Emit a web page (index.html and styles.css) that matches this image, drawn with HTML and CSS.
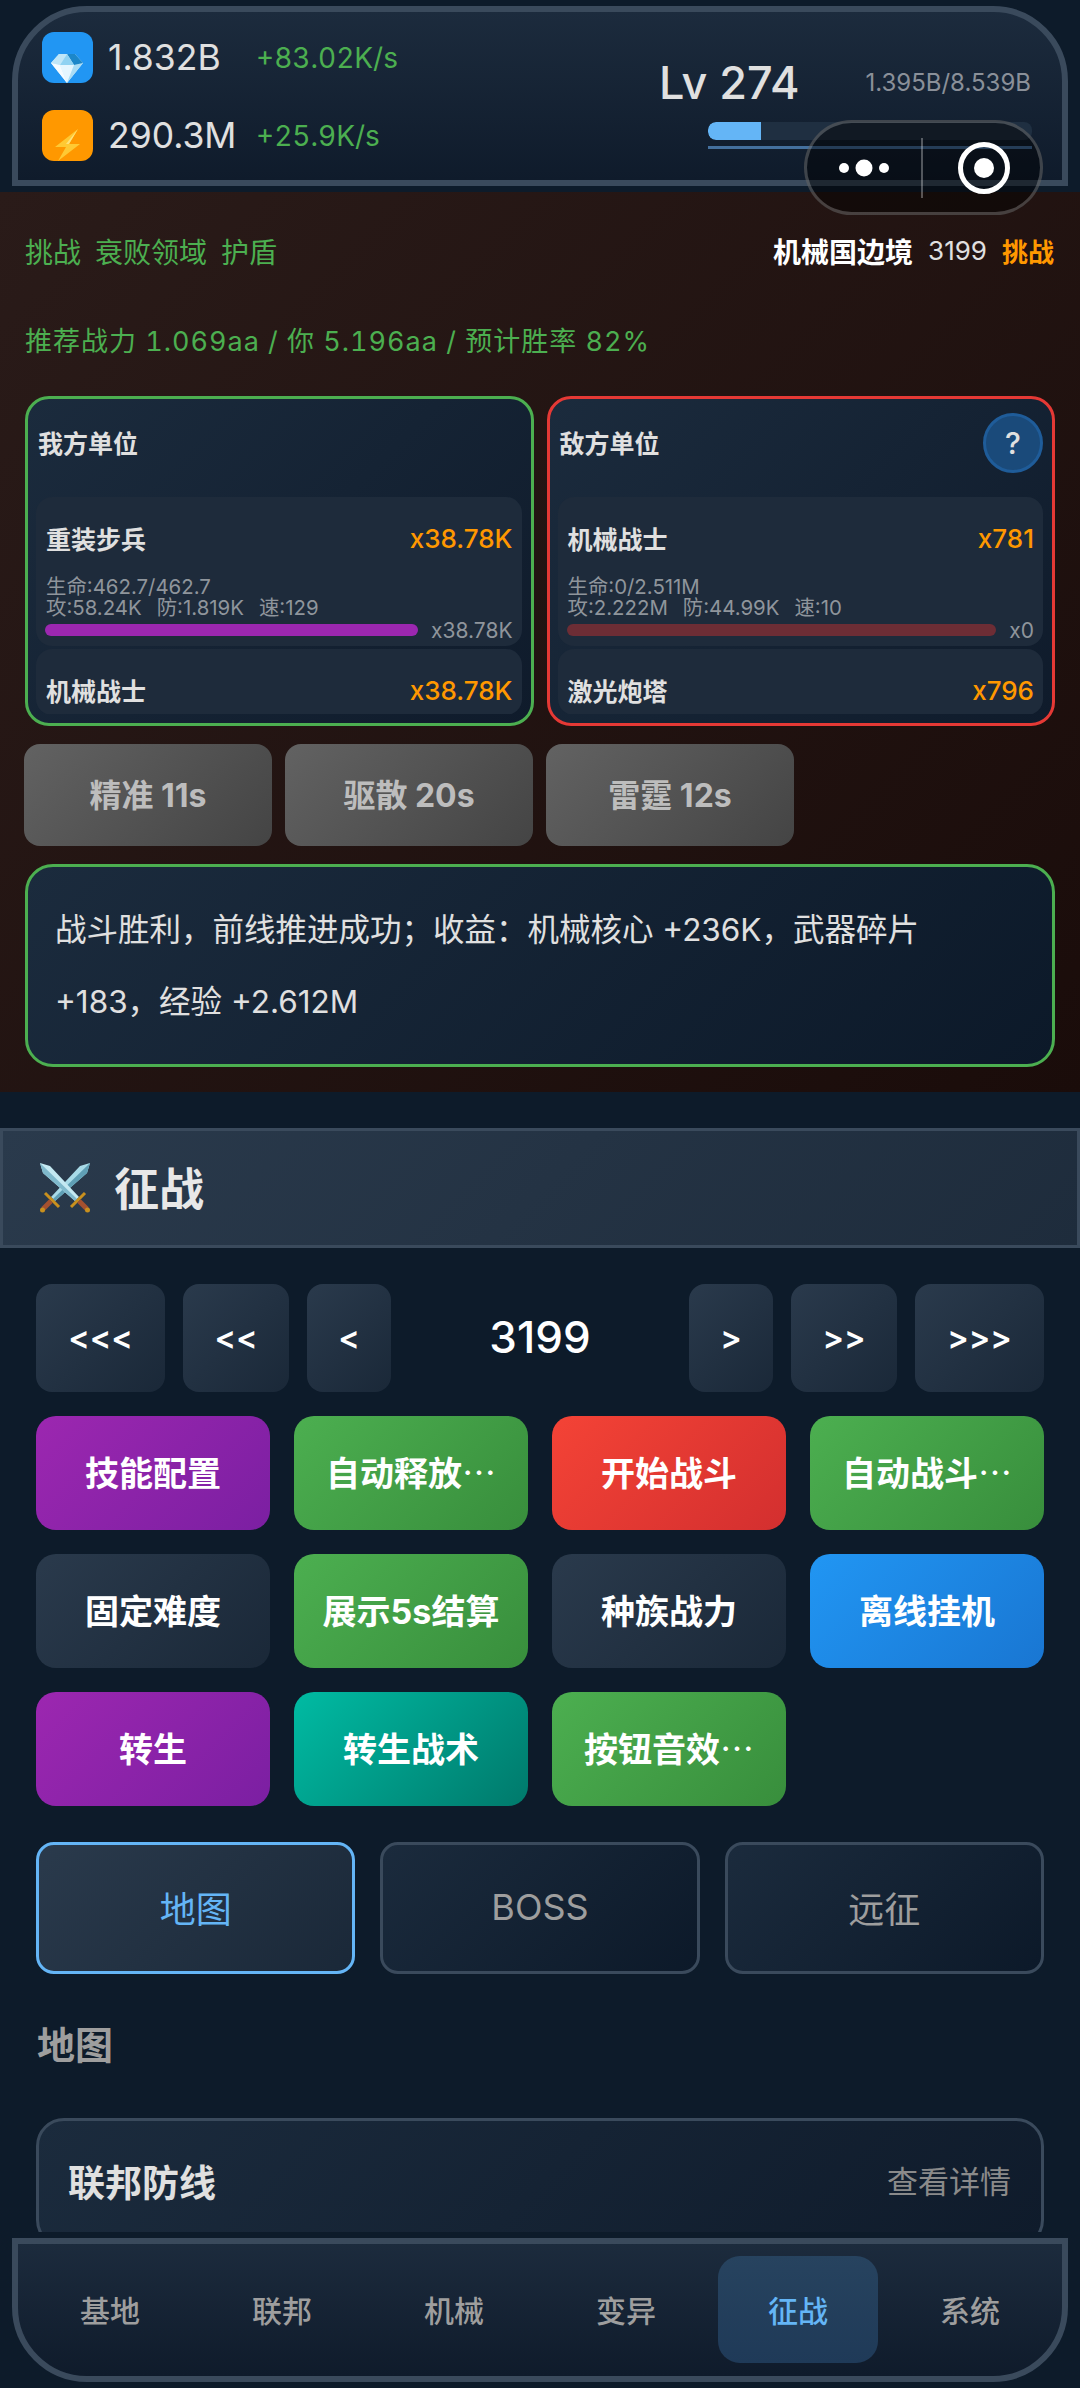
FILE: index.html
```html
<!DOCTYPE html>
<html lang="zh-CN">
<head>
 <meta charset="UTF-8">
 <meta name="viewport" content="width=device-width, initial-scale=1.0">
 <title>征战</title>
 <link rel="stylesheet" href="styles.css">
</head>
<body>

<header class="topBar">
 <div class="resList">
  <div class="resRow">
   <span class="resIcon blue">
    <svg viewBox="0 0 51 51" width="51" height="51">
     <polygon points="9,31 17,22 33,22 41,31 25,51" fill="#d6f0fc"/>
     <polygon points="9,31 18,33 25,51" fill="#f4fbff"/>
     <polygon points="18,33 32,33 25,51" fill="#e4f6ff"/>
     <polygon points="32,33 41,31 25,51" fill="#a9dcf5"/>
     <polygon points="17,22 25,22 18,33 9,31" fill="#bfe6f8"/>
     <polygon points="25,22 33,22 41,31 32,33" fill="#1c87c9"/>
     <polygon points="25,22 32,33 18,33" fill="#8fd2f2"/>
    </svg>
   </span>
   <span class="resValue">1.832B</span>
   <span class="resRate">+83.02K/s</span>
  </div>
  <div class="resRow">
   <span class="resIcon orange">
    <svg viewBox="0 0 51 51" width="51" height="51">
     <polygon points="36,19 13,37 24,37 16,51 38,34 27,34" fill="#ffc933"/>
     <polygon points="36,19 24,34 27,34" fill="#ffe27a"/>
    </svg>
   </span>
   <span class="resValue">290.3M</span>
   <span class="resRate">+25.9K/s</span>
  </div>
 </div>
 <div class="levelBox">
  <div class="levelHead">
   <span class="levelNum">Lv 274</span>
   <span class="levelExp">1.395B/8.539B</span>
  </div>
  <div class="expTrack"><div class="expFill" style="width:16.4%"></div></div>
  <div class="expLine"></div>
 </div>
</header>

<div class="capsule">
 <svg class="capsuleDots" viewBox="0 0 60 20" width="60" height="20">
  <circle cx="10" cy="10" r="5" fill="#fff"/>
  <circle cx="30" cy="10" r="8.5" fill="#fff"/>
  <circle cx="50" cy="10" r="5" fill="#fff"/>
 </svg>
 <span class="capsuleLine"></span>
 <svg class="capsuleRing" viewBox="0 0 54 54" width="54" height="54">
  <circle cx="27" cy="27" r="23.5" fill="none" stroke="#fff" stroke-width="5"/>
  <circle cx="27" cy="27" r="10" fill="#fff"/>
 </svg>
</div>

<section class="battle">
 <div class="battleHead">
  <div class="battleTags"><span>挑战</span><span>衰败领域</span><span>护盾</span></div>
  <div class="battleStage"><b>机械国边境</b><span>3199</span><b class="orangeText">挑战</b></div>
 </div>
 <div class="battleHint">推荐战力 1.069aa / 你 5.196aa / 预计胜率 82%</div>

 <div class="sides">
  <div class="side green">
   <div class="sideHead"><span>我方单位</span></div>
   <div class="unitList">
    <div class="unit">
     <div class="unitHead"><b>重装步兵</b><b class="orangeText">x38.78K</b></div>
     <div class="unitStats">
      <div>生命:462.7/462.7</div>
      <div><span>攻:58.24K</span><span>防:1.819K</span><span>速:129</span></div>
     </div>
     <div class="unitBar">
      <div class="barTrack"><div class="barFill purple"></div></div>
      <span>x38.78K</span>
     </div>
    </div>
    <div class="unit">
     <div class="unitHead"><b>机械战士</b><b class="orangeText">x38.78K</b></div>
    </div>
   </div>
  </div>
  <div class="side red">
   <div class="sideHead"><span>敌方单位</span><span class="helpBtn">?</span></div>
   <div class="unitList">
    <div class="unit">
     <div class="unitHead"><b>机械战士</b><b class="orangeText">x781</b></div>
     <div class="unitStats">
      <div>生命:0/2.511M</div>
      <div><span>攻:2.222M</span><span>防:44.99K</span><span>速:10</span></div>
     </div>
     <div class="unitBar">
      <div class="barTrack"><div class="barFill dead"></div></div>
      <span>x0</span>
     </div>
    </div>
    <div class="unit">
     <div class="unitHead"><b>激光炮塔</b><b class="orangeText">x796</b></div>
    </div>
   </div>
  </div>
 </div>

 <div class="skills">
  <div class="skillBtn">精准 11s</div>
  <div class="skillBtn">驱散 20s</div>
  <div class="skillBtn">雷霆 12s</div>
 </div>

 <div class="result">战斗胜利，前线推进成功；收益：机械核心 +236K，武器碎片 +183，经验 +2.612M</div>
</section>

<div class="pageTitle">
 <svg viewBox="0 0 50 50" width="50" height="50">
  <polygon points="50,0 47,10 15,38 11,34 40,3" fill="#a8dbe8"/>
  <polygon points="50,0 47,10 15,38 13,36" fill="#5f9fb5"/>
  <polygon points="0,0 10,3 39,34 35,38 3,10" fill="#c4e9f2"/>
  <polygon points="0,0 3,10 35,38 37,36" fill="#7fb9cc"/>
  <line x1="5" y1="30" x2="19" y2="44" stroke="#c8901e" stroke-width="3"/>
  <line x1="45" y1="30" x2="31" y2="44" stroke="#c8901e" stroke-width="3"/>
  <line x1="11" y1="38" x2="3" y2="46" stroke="#a5512f" stroke-width="5"/>
  <line x1="39" y1="38" x2="47" y2="46" stroke="#a5512f" stroke-width="5"/>
  <circle cx="2.5" cy="47" r="2.5" fill="#c8901e"/>
  <circle cx="47.5" cy="47" r="2.5" fill="#c8901e"/>
 </svg>
 <span>征战</span>
</div>

<main class="content">
 <div class="stepper">
  <div class="stepBtn wide">&lt;&lt;&lt;</div>
  <div class="stepBtn mid">&lt;&lt;</div>
  <div class="stepBtn small">&lt;</div>
  <div class="stepValue">3199</div>
  <div class="stepBtn small">&gt;</div>
  <div class="stepBtn mid">&gt;&gt;</div>
  <div class="stepBtn wide">&gt;&gt;&gt;</div>
 </div>

 <div class="actions">
  <div class="actBtn bgPurple">技能配置</div>
  <div class="actBtn bgGreen">自动释放<i>…</i></div>
  <div class="actBtn bgRed">开始战斗</div>
  <div class="actBtn bgGreen">自动战斗<i>…</i></div>
  <div class="actBtn bgSlate">固定难度</div>
  <div class="actBtn bgGreen">展示5s结算</div>
  <div class="actBtn bgSlate">种族战力</div>
  <div class="actBtn bgBlue">离线挂机</div>
  <div class="actBtn bgPurple">转生</div>
  <div class="actBtn bgTeal">转生战术</div>
  <div class="actBtn bgGreen">按钮音效<i>…</i></div>
 </div>

 <div class="tabs">
  <div class="tab active">地图</div>
  <div class="tab">BOSS</div>
  <div class="tab">远征</div>
 </div>

 <h2 class="sectionName">地图</h2>

 <div class="mapCard">
  <b>联邦防线</b>
  <span>查看详情</span>
 </div>
</main>

<nav class="bottomNav">
 <div class="navItem">基地</div>
 <div class="navItem">联邦</div>
 <div class="navItem">机械</div>
 <div class="navItem">变异</div>
 <div class="navItem active">征战</div>
 <div class="navItem">系统</div>
</nav>

</body>
</html>
```

FILE: styles.css
```css
*{
 box-sizing: border-box;
}

html, body{
 margin: 0;
 padding: 0;
}

body{
 position: relative;
 width: 1080px;
 height: 2388px;
 overflow: hidden;
 display: flex;
 flex-direction: column;
 background-color: #0d1b2a;
 color: #e0e0e0;
 font-family: Inter, "Noto Sans CJK SC", sans-serif;
}

b{
 font-weight: 700;
}

.orangeText{
 color: #ff9800;
}

/* top bar */
.topBar{
 flex: none;
 display: flex;
 justify-content: space-between;
 height: 180px;
 margin: 6px 12px;
 padding: 20px 30px 0 24px;
 border: 6px solid #3a4a5c;
 border-radius: 75px 75px 0 0;
 background: linear-gradient(180deg, #1c2b3d, #0f1b2b);
}

.resList{
 display: flex;
 flex-direction: column;
 gap: 27px;
}

.resRow{
 display: flex;
 align-items: center;
 height: 51px;
}

.resIcon{
 width: 51px;
 height: 51px;
 border-radius: 12px;
 overflow: hidden;
 display: block;
}

.resIcon svg{
 display: block;
}

.resIcon.blue{
 background-color: #2196f3;
}

.resIcon.orange{
 background-color: #ff9800;
}

.resValue{
 margin-left: 15px;
 font-size: 35.5px;
 width: 148px;
 color: #e0e0e0;
}

.resRate{
 font-size: 28px;
 font-variant-numeric: tabular-nums;
 color: #4caf50;
}

.levelBox{
 width: 373px;
 padding-top: 26px;
}

.levelHead{
 display: flex;
 justify-content: space-between;
 align-items: center;
 height: 48px;
}

.levelNum{
 font-size: 45px;
 font-weight: 500;
}

.levelExp{
 font-size: 24px;
 color: #8a9099;
 padding-right: 1px;
}

.expTrack{
 margin: 16px 0 0 49px;
 height: 18px;
 background-color: #1f2f41;
 border-radius: 8px;
 overflow: hidden;
}

.expFill{
 height: 100%;
 background-color: #64b5f6;
 border-radius: 8px 0 0 8px;
}

.expLine{
 margin: 6px 0 0 49px;
 height: 3px;
 background-color: #44709e;
}

/* wechat capsule */
.capsule{
 position: absolute;
 left: 804px;
 top: 120px;
 width: 239px;
 height: 95px;
 border: 3px solid rgba(255, 255, 255, 0.22);
 border-radius: 48px;
 background-color: rgba(0, 0, 0, 0.45);
}

.capsuleDots{
 position: absolute;
 left: 27px;
 top: 35px;
}

.capsuleLine{
 position: absolute;
 left: 114px;
 top: 15px;
 width: 2px;
 height: 60px;
 background-color: rgba(255, 255, 255, 0.3);
}

.capsuleRing{
 position: absolute;
 left: 150px;
 top: 18px;
}

/* battle */
.battle{
 flex: none;
 height: 900px;
 padding: 40px 25px 0;
 background: linear-gradient(135deg, #2a1b19, #1a0c0a);
}

.battleHead{
 display: flex;
 justify-content: space-between;
 align-items: center;
 height: 40px;
 padding-bottom: 3px;
 font-size: 28px;
}

.battleTags{
 display: flex;
 gap: 14px;
 color: #4caf50;
}

.battleStage{
 display: flex;
 align-items: center;
 gap: 15px;
 font-size: 26px;
 margin-right: 1px;
}

.battleStage b:first-child{
 color: #fff;
 font-size: 28px;
}

.battleHint{
 margin-top: 50px;
 height: 40px;
 line-height: 40px;
 font-size: 27px;
 font-variant-numeric: tabular-nums;
 letter-spacing: 1px;
 color: #4caf50;
}

.sides{
 display: flex;
 gap: 13px;
 margin-top: 34px;
}

.side{
 width: 509px;
 height: 330px;
 padding: 0 9px 0 8px;
 border: 3px solid;
 border-radius: 24px;
 background: linear-gradient(135deg, #1b2b3d, #0f1b2b);
}

.side.green{
 border-color: #4caf50;
}

.side.red{
 border-color: #e53935;
}

.sideHead{
 display: flex;
 justify-content: space-between;
 align-items: center;
 height: 88px;
 margin-bottom: 10px;
 padding-left: 2px;
 font-size: 25px;
 font-weight: 700;
}

.sideHead > span:first-child{
 padding-bottom: 3px;
}

.helpBtn{
 width: 60px;
 height: 60px;
 display: flex;
 align-items: center;
 justify-content: center;
 border: 3px solid #1f5c99;
 border-radius: 50%;
 background-color: #1a4a7a;
 font-size: 30px;
 font-weight: 500;
}

.unitList{
 height: 217px;
 overflow: hidden;
 display: flex;
 flex-direction: column;
 gap: 3px;
}

.unit{
 flex: none;
 padding: 24px 9px 6px;
 border-radius: 16px;
 background-color: #1e2b3b;
}

.unitHead{
 display: flex;
 justify-content: space-between;
 align-items: center;
 height: 34px;
 margin-bottom: 2px;
 font-size: 25px;
 padding-left: 1px;
}

.unitHead b:first-child{
 color: #e0e0e0;
}

.unitHead .orangeText{
 font-weight: 500;
 font-size: 26px;
}

.unitStats{
 margin-top: 21px;
 font-size: 20.4px;
 line-height: 21px;
 color: #8f959c;
 padding-left: 1px;
}

.unitStats span{
 margin-right: 15px;
}

.unitBar{
 display: flex;
 align-items: center;
 justify-content: space-between;
 height: 20px;
 margin-top: 2px;
 font-size: 21px;
 color: #8f959c;
}

.barTrack{
 flex: 1;
 margin-right: 13px;
}

.barFill{
 height: 12px;
 border-radius: 6px;
}

.barFill.purple{
 background-color: #9c27b0;
}

.barFill.dead{
 background-color: #6d2d35;
}

.skills{
 display: flex;
 gap: 13px;
 margin: 18px 0 0 -1px;
}

.skillBtn{
 width: 248px;
 height: 102px;
 padding-bottom: 4px;
 display: flex;
 align-items: center;
 justify-content: center;
 border-radius: 16px;
 background: linear-gradient(135deg, #626262, #444);
 color: #bdbdbd;
 font-size: 32px;
 font-weight: 700;
}

.result{
 height: 203px;
 margin-top: 18px;
 padding: 27px 80px 0 27px;
 border: 3px solid #4caf50;
 border-radius: 28px;
 background: linear-gradient(135deg, #1b2b3d, #0c1929);
 font-size: 31.5px;
 line-height: 72px;
 color: #e0e0e0;
}

/* section title */
.pageTitle{
 flex: none;
 display: flex;
 align-items: center;
 gap: 24px;
 height: 120px;
 margin-top: 36px;
 padding-left: 37px;
 border: 3px solid #3a4a5c;
 background: linear-gradient(135deg, #2a3a4c, #1e2c3c);
 font-size: 45px;
 font-weight: 700;
 color: #e8e8e8;
}

.pageTitle span{
 padding-bottom: 4px;
}

.content{
 flex: 1;
 min-height: 0;
 overflow: hidden;
 padding: 36px 36px 0;
}

.stepper{
 display: flex;
 align-items: center;
 gap: 18px;
}

.stepBtn{
 height: 108px;
 padding-bottom: 2px;
 display: flex;
 align-items: center;
 justify-content: center;
 border-radius: 16px;
 background: linear-gradient(135deg, #2a3a4c, #1a2838);
 color: #fff;
 font-size: 32px;
 font-weight: 600;
}

.stepBtn.wide{
 width: 129px;
}

.stepBtn.mid{
 width: 106px;
}

.stepBtn.small{
 width: 84px;
}

.stepValue{
 flex: 1;
 padding-bottom: 2px;
 text-align: center;
 font-size: 44px;
 font-weight: 500;
 color: #fff;
}

.actions{
 display: grid;
 grid-template-columns: repeat(4, 234px);
 grid-auto-rows: 114px;
 gap: 24px;
 margin-top: 24px;
}

.actBtn{
 display: flex;
 align-items: center;
 justify-content: center;
 padding-bottom: 4px;
 border-radius: 20px;
 color: #fff;
 font-size: 34px;
 font-weight: 700;
}

.actBtn i{
 font-style: normal;
 font-weight: 400;
 font-family: "Noto Sans CJK SC", sans-serif;
}

.bgPurple{
 background: linear-gradient(135deg, #9c27b0, #7b1fa2);
}

.bgGreen{
 background: linear-gradient(135deg, #4caf50, #388e3c);
}

.bgRed{
 background: linear-gradient(135deg, #f44336, #d32f2f);
}

.bgSlate{
 background: linear-gradient(135deg, #2a3a4c, #1a2838);
}

.bgBlue{
 background: linear-gradient(135deg, #2196f3, #1976d2);
}

.bgTeal{
 background: linear-gradient(135deg, #00bba3, #00796b);
}

.tabs{
 display: flex;
 gap: 25px;
 margin-top: 36px;
}

.tab{
 flex: 1;
 height: 132px;
 padding-bottom: 3px;
 display: flex;
 align-items: center;
 justify-content: center;
 border: 3px solid #3a4a5c;
 border-radius: 18px;
 background: linear-gradient(135deg, #1b2b3d, #0c1929);
 color: #9e9e9e;
 font-size: 36px;
}

.tab.active{
 border-color: #64b5f6;
 background: linear-gradient(135deg, #2a3a4c, #1a2838);
 color: #64b5f6;
}

.sectionName{
 margin: 49px 0 0 1px;
 height: 44px;
 line-height: 44px;
 font-size: 38px;
 font-weight: 700;
 color: #9e9e9e;
}

.mapCard{
 display: flex;
 justify-content: space-between;
 align-items: flex-start;
 height: 130px;
 margin-top: 51px;
 padding: 33px 30px 0 29px;
 border: 3px solid #3a4a5c;
 border-radius: 28px;
 background: linear-gradient(135deg, #1b2b3d, #0f1b2b);
 font-size: 37px;
}

.mapCard span{
 font-size: 31px;
 color: #8a8a8a;
 padding-top: 3px;
}

/* bottom nav */
.bottomNav{
 flex: none;
 display: flex;
 gap: 12px;
 height: 144px;
 margin: 6px 12px;
 padding: 12px 12px 0;
 border: 6px solid #3a4a5c;
 border-radius: 0 0 75px 75px;
 background: linear-gradient(180deg, #1c2b3d, #0f1b2b);
}

.navItem{
 flex: 1;
 height: 107px;
 padding-bottom: 2px;
 display: flex;
 align-items: center;
 justify-content: center;
 border-radius: 22px;
 color: #9e9e9e;
 font-size: 30px;
 font-weight: 500;
}

.navItem.active{
 background: linear-gradient(180deg, #27435f, #1f3a58);
 color: #64b5f6;
}
```
